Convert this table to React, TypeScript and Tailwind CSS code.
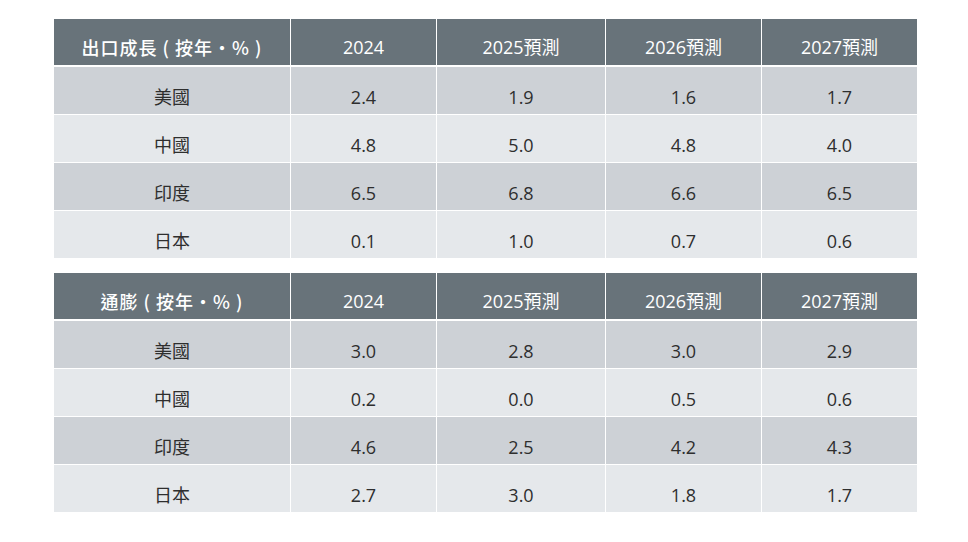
import React from 'react';

type Table = {
  title: string;
  rows: [string, string, string, string, string][];
};

const years = ['2024', '2025預測', '2026預測', '2027預測'];

const tables: Table[] = [
  {
    title: '出口成長 ( 按年·% )',
    rows: [
      ['美國', '2.4', '1.9', '1.6', '1.7'],
      ['中國', '4.8', '5.0', '4.8', '4.0'],
      ['印度', '6.5', '6.8', '6.6', '6.5'],
      ['日本', '0.1', '1.0', '0.7', '0.6'],
    ],
  },
  {
    title: '通膨 ( 按年·% )',
    rows: [
      ['美國', '3.0', '2.8', '3.0', '2.9'],
      ['中國', '0.2', '0.0', '0.5', '0.6'],
      ['印度', '4.6', '2.5', '4.2', '4.3'],
      ['日本', '2.7', '3.0', '1.8', '1.7'],
    ],
  },
];

const cols = 'grid grid-cols-[236px_145px_168px_155px_155px] gap-x-px';

const DataTable: React.FC<{ table: Table }> = ({ table }) => (
  <div className="flex flex-col bg-white w-[863px]">
    {/* Header */}
    <div className={`${cols} h-[46px] mb-[2px]`}>
      <div
        className="bg-[#68737a] text-white font-medium flex items-center justify-center pt-[10px] whitespace-pre tracking-[1px]"
        style={{ fontFamily: '"Noto Sans CJK TC", sans-serif' }}
      >
        {table.title}
      </div>
      {years.map((y) => (
        <div key={y} className="bg-[#68737a] text-white flex items-center justify-center pt-[10px]">
          {y}
        </div>
      ))}
    </div>

    {/* Body */}
    <div className="flex flex-col gap-y-px">
      {table.rows.map((row, i) => (
        <div key={row[0]} className={`${cols} h-[47px]`}>
          {row.map((cell, j) => (
            <div
              key={j}
              className={`${i % 2 === 0 ? 'bg-[#cdd1d6]' : 'bg-[#e5e8eb]'} text-[#2e2e2e] flex items-center justify-center pt-[12px]`}
            >
              {cell}
            </div>
          ))}
        </div>
      ))}
    </div>
  </div>
);

const App: React.FC = () => {
  return (
    <div
      className="w-[968px] h-[542px] bg-white pt-[19px] pl-[54px] flex flex-col gap-[15px] text-[18px] leading-[22px]"
      style={{ fontFamily: '"Open Sans", "Noto Sans CJK TC", sans-serif' }}
    >
      {tables.map((t) => (
        <DataTable key={t.title} table={t} />
      ))}
    </div>
  );
};

export default App;
